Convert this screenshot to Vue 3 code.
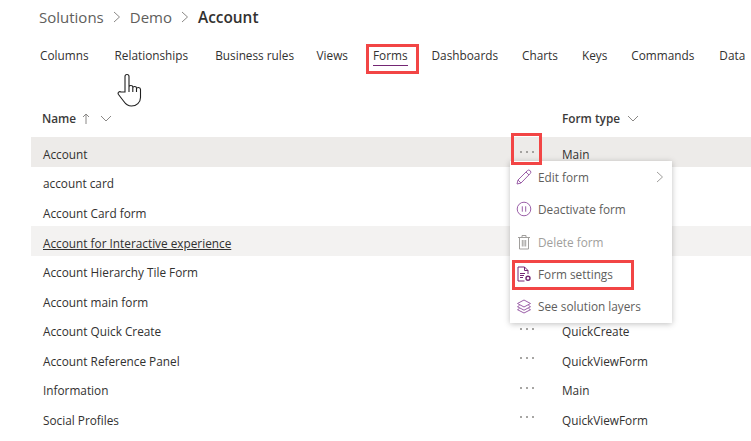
<script setup>
const tabs = [
  { label: 'Columns' },
  { label: 'Relationships' },
  { label: 'Business rules' },
  { label: 'Views' },
  { label: 'Forms', active: true },
  { label: 'Dashboards' },
  { label: 'Charts' },
  { label: 'Keys' },
  { label: 'Commands' },
  { label: 'Data' },
]
const rows = [
  { name: 'Account', type: 'Main', selected: true },
  { name: 'account card', type: '' },
  { name: 'Account Card form', type: '' },
  { name: 'Account for Interactive experience', type: '', hover: true },
  { name: 'Account Hierarchy Tile Form', type: '' },
  { name: 'Account main form', type: '' },
  { name: 'Account Quick Create', type: 'QuickCreate' },
  { name: 'Account Reference Panel', type: 'QuickViewForm' },
  { name: 'Information', type: 'Main' },
  { name: 'Social Profiles', type: 'QuickViewForm' },
]
</script>

<template>
  <div class="page">
    <nav class="crumbs">
      <span>Solutions</span>
      <svg class="sep" width="8" height="12" viewBox="0 0 8 12"><path d="M1 1l5.500 5L1 11" /></svg>
      <span>Demo</span>
      <svg class="sep" width="8" height="12" viewBox="0 0 8 12"><path d="M1 1l5.500 5L1 11" /></svg>
      <strong>Account</strong>
    </nav>

    <div class="tabs">
      <span v-for="t in tabs" :key="t.label" class="tab" :class="{ active: t.active }">{{ t.label }}</span>
    </div>

    <div class="head">
      <div class="h-name">
        <span>Name</span>
        <svg width="8" height="11" viewBox="0 0 8 11"><path d="M4 11V1M1 4l3-3 3 3" /></svg>
        <svg class="chev" width="12" height="7" viewBox="0 0 12 7"><path d="M1 1l5 5 5-5" /></svg>
      </div>
      <div class="h-type">
        <span>Form type</span>
        <svg class="chev" width="12" height="7" viewBox="0 0 12 7"><path d="M1 1l5 5 5-5" /></svg>
      </div>
    </div>

    <div class="rows">
      <div v-for="r in rows" :key="r.name" class="row" :class="{ selected: r.selected, hover: r.hover }">
        <span class="name">{{ r.name }}</span>
        <span class="dots"><i></i><i></i><i></i></span>
        <span class="type">{{ r.type }}</span>
      </div>
    </div>

    <div class="menu">
      <div class="item">
        <svg width="16" height="16" viewBox="0 0 16 16"><path d="M1 15l1-4L11.300 1.700a1.800 1.800 0 0 1 2.900 2.900L5 14zM2 11l3 3M10 3l3 3" /></svg>
        <span>Edit form</span>
        <svg class="more" width="8" height="12" viewBox="0 0 8 12"><path d="M1 1l5.500 5L1 11" /></svg>
      </div>
      <div class="item">
        <svg width="16" height="16" viewBox="0 0 16 16"><circle cx="8" cy="8" r="6.800" /><path d="M6.300 5.300v5.400M9.700 5.300v5.400" /></svg>
        <span>Deactivate form</span>
      </div>
      <div class="item off">
        <svg width="16" height="16" viewBox="0 0 16 16"><path d="M2 3.500h12M6 3.500V1.500h4v2M3.500 3.500V15h9V3.500M6.300 6v6.500M8 6v6.500M9.700 6v6.500" /></svg>
        <span>Delete form</span>
      </div>
      <div class="item">
        <svg width="16" height="16" viewBox="0 0 16 16"><path class="dark" d="M8.500 15H2V1h6.500L12 4.500V8M8.500 1v3.500H12M4 7.500h5M4 9.500h4M4 11.500h3" /><circle class="gear" cx="12" cy="12.300" r="2" /></svg>
        <span>Form settings</span>
      </div>
      <div class="item">
        <svg width="16" height="16" viewBox="0 0 16 16"><path d="M8 2l6.500 3.500L8 9 1.500 5.500zM3.500 7.500l-2 1.200L8 12.200l6.500-3.500-2-1.200M3.500 10.500l-2 1.200L8 15l6.500-3.300-2-1.200" /></svg>
        <span>See solution layers</span>
      </div>
    </div>

    <div class="mark mark-tab"></div>
    <div class="mark mark-dots"></div>
    <div class="mark mark-settings"></div>

    <svg class="cursor" width="27" height="34" viewBox="0 0 27 34">
      <path d="M8 19V3.500a2 2 0 0 1 4 0V14c0-2 3.800-2 3.800 0v1c0-2 3.700-2 3.700 0v1c0-2 4-2 4 .5v8c0 5-4 8.500-9 8.500-4 0-6-2-8-5l-5-6.500c-1.300-2 1-3.500 2.500-2.500z" />
      <path d="M12 14v5M15.800 15v4M19.500 16v3" />
    </svg>
  </div>
</template>

<style>
html, body { margin: 0; background: #fff; overflow: hidden; }
</style>

<style scoped>
.page {
  position: relative;
  width: 751px;
  height: 441px;
  overflow: hidden;
  background: #fff;
  font-family: "Open Sans", "Noto Sans", sans-serif;
  font-size: 11.800px;
  color: #323130;
}
svg { fill: none; stroke: currentColor; stroke-width: 1; display: block; }

.crumbs {
  display: flex;
  align-items: center;
  height: 24px;
  padding: 5px 0 0 39px;
  font-size: 15px;
  color: #605e5c;
}
.crumbs .sep { margin: 0 9px; color: #8a8886; }
.crumbs strong { font-weight: 600; font-size: 15.400px; color: #323130; }

.tabs {
  display: flex;
  padding: 16px 0 0 40px;
  height: 29px;
  white-space: nowrap;
}
.tab { margin-right: 24px; height: 20px; line-height: 20px; padding-bottom: 1px; }
.tab:nth-child(1) { margin-right: 26px; }
.tab:nth-child(2) { margin-right: 27px; }
.tab:nth-child(3) { margin-right: 22.500px; }
.tab:nth-child(4) { margin-right: 25px; }
.tab:nth-child(7) { margin-right: 24px; }
.tab:nth-child(9) { margin-right: 25px; }
.tab.active { border-bottom: 1px solid #742774; padding-bottom: 0; }

.head {
  display: grid;
  grid-template-columns: 520px 1fr;
  padding: 34px 0 0 42px;
  height: 28px;
  font-weight: 600;
}
.h-name, .h-type { display: flex; align-items: center; gap: 6px; height: 20px; color: #3b3a39; }
.h-name svg { color: #8a8886; }
.h-name .chev { margin-left: 4px; }
.h-type .chev { color: #8a8886; margin-left: 1px; }

.rows { margin: 1px 0 0 31px; }
.row {
  display: grid;
  grid-template-columns: 476px 43px 1fr;
  align-items: center;
  height: 29.550px;
  padding: 4px 0 0 12px;
  box-sizing: border-box;
}
.row.selected { background: #edebe9; height: 30.400px; margin-bottom: -.850px; }
.row.hover { background: #f3f2f1; height: 29.750px; margin-top: .800px; margin-bottom: -1px; padding-top: 2.400px; }
.row.hover .name { text-decoration: underline; }
.dots { display: flex; gap: 4px; margin: 0 0 5px 1px; color: #8a8886; }
.dots i { width: 2px; height: 2px; border-radius: 50%; background: currentColor; display: block; }

.menu {
  position: absolute;
  left: 510px;
  top: 161px;
  width: 162px;
  height: 162px;
  background: #fff;
  box-shadow: 0 1px 6px rgba(0, 0, 0, .25);
  display: flex;
  flex-direction: column;
}
.item {
  display: flex;
  align-items: center;
  height: 32.300px;
  padding-left: 6px;
  gap: 6px;
  color: #605e5c;
}
.item svg { color: #9b5fa8; flex: none; }
.item svg .dark { stroke: #742774; }
.item svg .gear { stroke: #742774; stroke-width: 1.400; }
.item .more { margin-left: auto; margin-right: 8px; color: #a19f9d; }
.item.off, .item.off svg { color: #a19f9d; }

.mark { position: absolute; border: 3px solid #f24545; box-sizing: border-box; }
.mark-tab { left: 366px; top: 44px; width: 53px; height: 30px; }
.mark-dots { left: 511px; top: 133px; width: 31px; height: 32px; }
.mark-settings { left: 512px; top: 260px; width: 122px; height: 30px; }

.cursor { position: absolute; left: 117px; top: 73px; color: #1f1f1f; fill: #fff; }
.cursor path { fill: #fff; stroke-width: 1.100; }
</style>
